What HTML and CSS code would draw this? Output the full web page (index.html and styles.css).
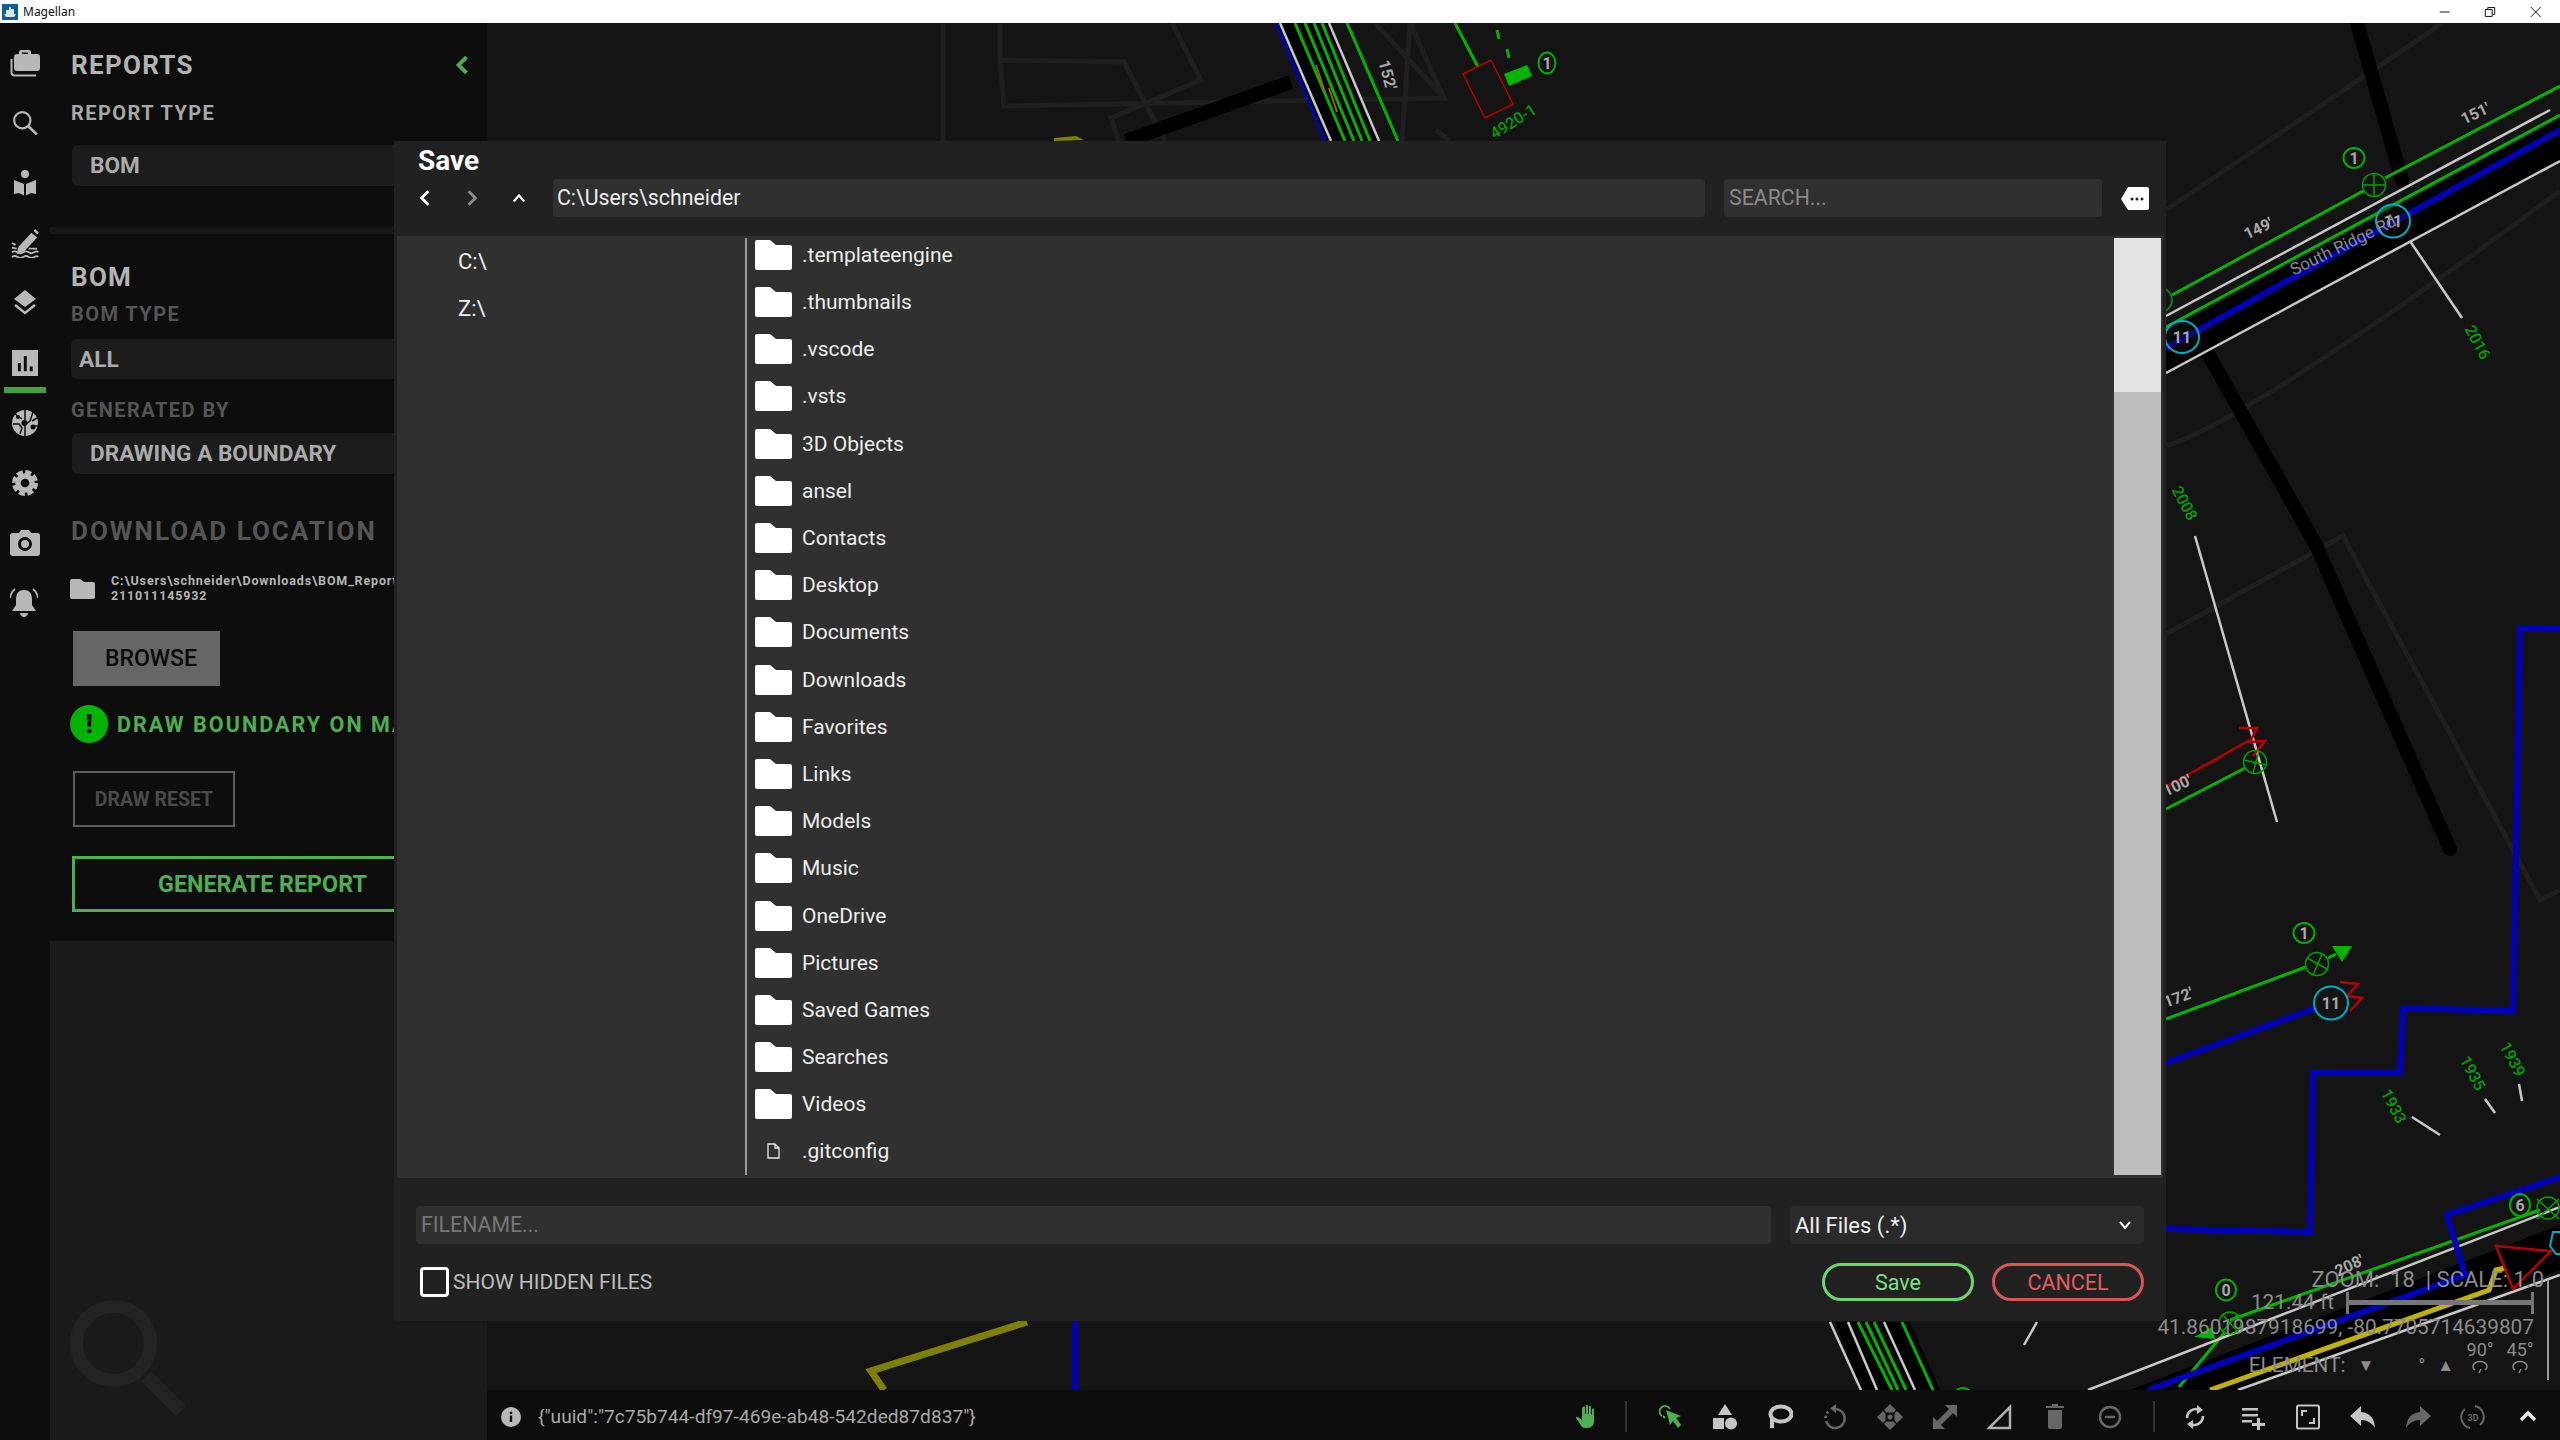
FILE: index.html
```html
<!DOCTYPE html>
<html lang="en">
<head>
<meta charset="utf-8">
<title>Magellan</title>
<link rel="stylesheet" href="styles.css">
</head>
<body>
<svg class="defs" width="0" height="0" aria-hidden="true">
  <defs>
    <symbol id="folder" viewBox="0 0 37 30"><path d="M2 0h13l6 5h14q2 0 2 2v21q0 2-2 2H2q-2 0-2-2V2q0-2 2-2z"/></symbol>
  </defs>
</svg>
<header class="titlebar">
  <svg class="app-logo" viewBox="0 0 16 16"><rect width="16" height="16" fill="#0f5c9c"/><path d="M7 3h2v2h3v5h2l-2 3H4l-2-3h2V6h3z" fill="#dbe8f2"/></svg>
  <span class="app-name">Magellan</span>
  <div class="winctl">
    <svg class="winbtn" viewBox="0 0 46 20"><path d="M18 10h10" stroke="#111" fill="none"/></svg>
    <svg class="winbtn" viewBox="0 0 46 20"><path d="M18.500 7.500h7v7h-7zM21 7V5.500h7v7h-2" stroke="#111" fill="none"/></svg>
    <svg class="winbtn" viewBox="0 0 46 20"><path d="M18 5l10 10M28 5L18 15" stroke="#111" fill="none"/></svg>
  </div>
</header>
<div class="app">
  <nav class="rail">
    <div class="rail-item"><svg class="wide" viewBox="0 0 30 28"><path d="M9 5V3q0-2 2-2h8q2 0 2 2v2h6q3 0 3 3v11q0 3-3 3H7q-3 0-3-3V8q0-3 3-3zm3 0h6V3.500h-6z" fill-rule="evenodd"/><path d="M1.500 10v13q0 3.500 3.500 3.500h21" fill="none" stroke="currentColor" stroke-width="2"/></svg></div>
    <div class="rail-item"><svg viewBox="0 0 24 24"><circle cx="9.500" cy="9.500" r="7.500" fill="none" stroke="currentColor" stroke-width="2"/><path d="M15 15l8 7.500" stroke="currentColor" stroke-width="2.500" fill="none"/></svg></div>
    <div class="rail-item"><svg viewBox="0 0 24 26"><circle cx="12" cy="4" r="4"/><path d="M1 10l10 4v11.500L6 23l-5 1zM23 10l-10 4v11.500l5-2.500 5 1z"/></svg></div>
    <div class="rail-item"><svg class="tall" viewBox="0 0 30 32"><path d="M8 20L22 5l6 5-14 15-8 3zM24 3l2-2 4 4-2 2z"/><path d="M1 16l4 2M1 21l5 1M1 26q3-2 6 0t6 0 6 0 6 0 4 0M1 31q3-2 6 0t6 0 6 0 6 0 4 0M19 22h9" fill="none" stroke="currentColor" stroke-width="2"/></svg></div>
    <div class="rail-item"><svg viewBox="0 0 24 26"><path d="M12 0l11 9-11 8L1 9z"/><path d="M2 15l10 8 10-8" fill="none" stroke="currentColor" stroke-width="2.500"/></svg></div>
    <div class="rail-item active"><svg viewBox="0 0 22 22"><path d="M0 0h22v22H0z"/><path d="M5 11h2.500v7H5zM10 5h2.500v13H10zM15 14h2.500v4H15z" fill="#0d0d0d"/></svg></div>
    <div class="rail-item"><svg viewBox="0 0 26 26"><circle cx="13" cy="13" r="13"/><path d="M13 0v10M3 4l7 5M21 2l-3 9-5 4v11M1 14h6l3 4-2 6M25 8l-5 3M26 16h-6" fill="none" stroke="#0d0d0d" stroke-width="1.500"/><circle cx="12.500" cy="13" r="3" fill="#0d0d0d"/><circle cx="21" cy="17" r="2.500" fill="#0d0d0d"/><circle cx="6" cy="7" r="2" fill="#0d0d0d"/></svg></div>
    <div class="rail-item"><svg viewBox="0 0 24 24"><circle cx="12" cy="12" r="6.500" fill="none" stroke="currentColor" stroke-width="5"/><circle cx="12" cy="12" r="10" fill="none" stroke="currentColor" stroke-width="4" stroke-dasharray="5.500 2.350"/></svg></div>
    <div class="rail-item"><svg class="wide" viewBox="0 0 30 26"><path fill-rule="evenodd" d="M3 3h6l2-3h8l2 3h6q3 0 3 3v17q0 3-3 3H3q-3 0-3-3V6q0-3 3-3zm12 4a7 7 0 1 0 0 14 7 7 0 0 0 0-14zm0 3a4 4 0 1 1 0 8 4 4 0 0 1 0-8z"/></svg></div>
    <div class="rail-item"><svg class="bell" viewBox="0 0 28 30"><path d="M14 2q8 0 8 9v6l4 6H2l4-6v-6q0-9 8-9zM10 25h8q-1 4-4 4t-4-4z"/><path d="M5 1Q1 4 0 10M23 1q4 3 5 9" fill="none" stroke="currentColor" stroke-width="1.800"/></svg></div>
  </nav>
  <aside class="side">
    <section class="panel">
      <div class="panel-head">
        <h1 class="h-big">REPORTS</h1>
        <svg class="collapse" viewBox="0 0 12 18"><path d="M10 2L3 9l7 7" fill="none" stroke="#4caf50" stroke-width="3.500"/></svg>
      </div>
      <div class="label lab-report">REPORT TYPE</div>
      <div class="select sel-report">BOM</div>
      <div class="sep"></div>
      <h2 class="h-big h-bom">BOM</h2>
      <div class="label dim lab-bomtype">BOM TYPE</div>
      <div class="select sel-all">ALL</div>
      <div class="label dim lab-gen">GENERATED BY</div>
      <div class="select sel-gen">DRAWING A BOUNDARY</div>
      <h2 class="h-big dim h-dl">DOWNLOAD LOCATION</h2>
      <div class="path-row">
        <svg class="path-icon" viewBox="0 0 25 20"><path d="M2 0h8l4 3h9q2 0 2 2v13q0 2-2 2H2q-2 0-2-2V2q0-2 2-2z"/></svg>
        <div class="path-text">C:\Users\schneider\Downloads\BOM_Report_<br>211011145932</div>
      </div>
      <button class="btn-browse">BROWSE</button>
      <div class="alert"><span class="alert-dot">!</span><span class="alert-text">DRAW BOUNDARY ON MAP</span></div>
      <button class="btn-reset">DRAW RESET</button>
      <button class="btn-gen">GENERATE REPORT</button>
    </section>
    <div class="side-empty">
      <svg class="ghost" viewBox="0 0 130 130"><circle cx="43.500" cy="43.500" r="37" fill="none" stroke="#232323" stroke-width="13"/><path d="M76 76l35 35" stroke="#232323" stroke-width="14" fill="none"/></svg>
    </div>
  </aside>
  <main class="main">
    <div class="map">
      <svg class="map-svg" viewBox="487 23 2073 1367">
        <g class="road">
          <path d="M943 23V141M1000 23V60L1004 106 1444 98 1410 23 1402 141M1000 60L1124 62 1165 141M1172 23L1201 80 1111 118 1119 141M1375 23L1444 98M1436 130L1450 141"/>
          <path d="M2166 210L2443 23M2166 446Q2250 420 2560 191M2166 634L2343 536 2540 900 2560 890"/>
        </g>
        <path class="bk" d="M1126 141L1291 82" stroke-width="14"/>
        <path class="bk" d="M2357 23L2402 180M2207 352L2317 547 2340 600 2450 849" stroke-width="14" stroke-linecap="round"/>
        <path d="M1054 141l30-1-8-4-22 2z" fill="#808000"/>

        <path d="M2166 332L2560 118V161L2166 373z" fill="#000"/>
        <path d="M1277 23H1330L1380 141H1326z" fill="#000"/>
        <path d="M1835 1322H1910L1940 1390H1860z" fill="#000"/>
        <path d="M2130 1390L2560 1225V1270L2241 1390z" fill="#000"/>

        <g class="ln-g">
          <path d="M1295 23L1345 141M1305 23L1354 141M1314 23L1362 141M1322 23L1370 141M1347 23L1398 141M1455 23L1478 67M1497 30l2 9M1507 49l2 9"/>
          <path d="M2172 295L2363 191M2385 178L2560 86M2166 327L2560 115M2166 809L2245 768M2166 1019L2306 967M2328 958L2336 954M2230 1320L2540 1210M2179 1387L2225 1332"/>
          <path d="M1858 1322L1892 1390M1866 1322L1898 1390M1874 1322L1906 1390M1902 1322L1933 1390"/>
        </g>
        <path d="M1316 65L1325 92M1329 88L1337 112" fill="none" stroke="#a05a10" stroke-width="2"/>
        <g class="ln-w">
          <path d="M1280 23L1331 141M1329 23L1379 141M2166 316L2550 110M2166 373L2560 161M2410 241L2462 318M2195 536L2277 822"/>
          <path d="M1830 1322L1861 1390M1848 1322L1877 1390M1884 1322L1915 1390M2088 1390L2560 1207M2238 1390L2560 1275M2037 1322L2024 1345"/>
          <path d="M2412 1117l28 18M2485 1099l10 14M2519 1084l3 17"/>
        </g>
        <g class="ln-b">
          <path d="M1276 23L1325 141" stroke-width="3"/>
          <path d="M2166 348L2560 130"/>
          <path d="M2166 1063L2316 1008"/>
          <path d="M2560 628H2520L2513 1011 2403 1008 2400 1073H2313L2310 1232 2166 1229"/>
          <path d="M1075 1322V1390"/>
          <path d="M2560 1177L2447 1215 2465 1275 2148 1390"/>
        </g>
        <path d="M1027 1322L871 1371 884 1390" fill="none" stroke="#808000" stroke-width="7"/>
        <path d="M2210 1390L2489 1290 2496 1270 2505 1268" fill="none" stroke="#bfb300" stroke-width="5"/>
        <path d="M2548 1280V1380" fill="none" stroke="#9a9a9a" stroke-width="2"/>

        <g class="ln-r">
          <path d="M1463 74L1491 60 1513 104 1485 118z" stroke-width="1.500"/>
          <path d="M2166 787L2250 740M2239 728h18l-7 14 15-1-12 15" stroke-width="2.500"/>
          <path d="M2340 982l18 2-11 12 15 2-12 13" stroke-width="2.500"/>
          <path d="M2496 1246L2551 1251 2513 1289z" stroke-width="2.500"/>
        </g>
        <path d="M1504 74L1527 65 1532 76 1509 86z" fill="#00b400"/>
        <path d="M2332 946H2352L2342 962z" fill="#00b400"/>
        <path d="M2194 1337L2212 1327 2215 1339z" fill="#00b400"/>

        <g class="cross">
          <circle cx="2374" cy="185" r="11.500"/><path d="M2363 185h23M2374 173v24"/>
          <circle cx="2255" cy="762" r="11.500"/><path d="M2244 760l22 5M2259 751l-6 22"/>
          <circle cx="2317" cy="964" r="11.500"/><path d="M2307 958l20 11M2322 954l-9 21"/>
          <circle cx="2230" cy="1323" r="11"/><path d="M2222 1314l16 18M2238 1314l-16 18"/>
          <circle cx="2160" cy="300" r="12"/><circle cx="2548" cy="1208" r="11"/><path d="M2537 1199l22 20M2559 1199l-22 20"/>
        </g>
        <g class="badge-g">
          <ellipse cx="1547" cy="63" rx="8.500" ry="10.500"/><ellipse cx="2354" cy="158" rx="10.500" ry="10"/><ellipse cx="2304" cy="933" rx="10.500" ry="10"/><ellipse cx="2226" cy="1290" rx="10" ry="10.500"/><ellipse cx="2520" cy="1205" rx="10" ry="11"/>
          <circle cx="1963" cy="1398" r="10"/>
        </g>
        <g class="badge-t">
          <ellipse cx="2182" cy="337" rx="17" ry="16"/><ellipse cx="2393" cy="221" rx="17" ry="16.500"/><ellipse cx="2331" cy="1003" rx="17" ry="16.500"/><path d="M2560 1232h-7l-3 14 6 8h4"/>
        </g>
        <g class="m-txt">
          <text x="1547" y="69" text-anchor="middle">1</text>
          <text x="2354" y="164" text-anchor="middle">1</text>
          <text x="2304" y="939" text-anchor="middle">1</text>
          <text x="2226" y="1296" text-anchor="middle">0</text>
          <text x="2520" y="1211" text-anchor="middle">6</text>
          <text x="2182" y="343" text-anchor="middle">11</text>
          <text x="2393" y="227" text-anchor="middle">11</text>
          <text x="2331" y="1009" text-anchor="middle">11</text>
          <text x="1387" y="80" text-anchor="middle" transform="rotate(75 1387 75)">152'</text>
          <text x="2258" y="234" text-anchor="middle" transform="rotate(-25 2258 228)">149'</text>
          <text x="2475" y="119" text-anchor="middle" transform="rotate(-25 2475 113)">151'</text>
          <text x="2177" y="791" text-anchor="middle" transform="rotate(-25 2177 785)">100'</text>
          <text x="2178" y="1003" text-anchor="middle" transform="rotate(-20 2178 997)">172'</text>
          <text x="2349" y="1271" text-anchor="middle" transform="rotate(-25 2349 1265)">208'</text>
          <text class="street" x="2343" y="251" text-anchor="middle" transform="rotate(-26 2343 245)">South Ridge Rd</text>
        </g>
        <g class="m-grn">
          <text x="1513" y="127" text-anchor="middle" transform="rotate(-32 1513 121)">4920-1</text>
          <text x="2478" y="348" text-anchor="middle" transform="rotate(62 2478 342)">2016</text>
          <text x="2185" y="509" text-anchor="middle" transform="rotate(62 2185 503)">2008</text>
          <text x="2394" y="1112" text-anchor="middle" transform="rotate(62 2394 1106)">1933</text>
          <text x="2473" y="1079" text-anchor="middle" transform="rotate(62 2473 1073)">1935</text>
          <text x="2513" y="1065" text-anchor="middle" transform="rotate(62 2513 1059)">1939</text>
        </g>
      </svg>
      <div class="hud">
        <div class="hud-zoom">ZOOM:&nbsp;&nbsp;18&nbsp;&nbsp;|&nbsp;SCALE:&nbsp;1.0</div>
        <div class="hud-scale"><span>121.44 ft</span><i class="bar"></i></div>
        <div class="hud-coord">41.8601987918699, -80.7705714639807</div>
        <div class="hud-el"><span>ELEMENT:</span><span class="tri">▼</span><span class="deg">°</span><span class="tri">▲</span>
          <span class="rot"><b>90°</b><svg viewBox="0 0 20 14"><path d="M5 10A7 5 0 1 1 15 10M11 9l-2 4" fill="none" stroke="currentColor" stroke-width="1.500"/></svg></span>
          <span class="rot"><b>45°</b><svg viewBox="0 0 20 14"><path d="M5 10A7 5 0 1 1 15 10M11 9l-2 4" fill="none" stroke="currentColor" stroke-width="1.500"/></svg></span>
        </div>
      </div>
    </div>
    <footer class="status">
      <svg class="info" viewBox="0 0 20 20"><circle cx="10" cy="10" r="10" fill="#b9b9b9"/><path d="M8.800 8.500h2.400V15H8.800zM8.800 4.700h2.400v2.400H8.800z" fill="#0d0d0d"/></svg>
      <span class="status-text">{"uuid":"7c75b744-df97-469e-ab48-542ded87d837"}</span>
      <div class="tools">
        <span class="tool on"><svg viewBox="0 0 24 26"><path d="M8 3q1-1.500 2 0v7h1V1.500q1-1.500 2 0V10h1V2.500q1-1.500 2 0V11h1V5q1-1.500 2 0v12q0 7-7 7H10q-3 0-5-4l-4-6q0-2 2-1l4 3V5q0-1.500 1-2z"/></svg></span>
        <i class="tool-div first"></i>
        <span class="tool on"><svg viewBox="0 0 24 26"><path d="M8 6l15 6-5 2 5 7-3 3-5-7-3 4z"/><path d="M4 11A5.500 5.500 0 1 1 12 4" fill="none" stroke="currentColor" stroke-width="1.800" transform="translate(0 1)"/><path d="M5 12l2 2" stroke="currentColor" stroke-width="2"/></svg></span>
        <span class="tool lit"><svg viewBox="0 0 26 26"><path d="M13 0l7 11H6zM1 14h11v11H1z"/><circle cx="19" cy="19.500" r="6"/></svg></span>
        <span class="tool lit"><svg viewBox="0 0 26 26"><path d="M5 24V15" stroke="currentColor" stroke-width="4" fill="none"/><ellipse cx="14" cy="10" rx="10.500" ry="7.500" fill="none" stroke="currentColor" stroke-width="4"/></svg></span>
        <span class="tool dimt"><svg viewBox="0 0 26 26"><path d="M13 5a9.500 9.500 0 1 1-9 12" fill="none" stroke="currentColor" stroke-width="2.600"/><path d="M14 0v9L8 4.500z"/><path d="M3.500 14a9.500 9.500 0 0 1 3-6.500" fill="none" stroke="currentColor" stroke-width="2.600" stroke-dasharray="2.500 2"/></svg></span>
        <span class="tool dimt"><svg viewBox="0 0 26 26"><path d="M13 0l6 6-2.500 2.500h-7L7 6zM13 26l-6-6 2.500-2.500h7L19 20zM0 13l6-6 2.500 2.500v7L6 19zM26 13l-6 6-2.500-2.500v-7L20 7z"/><circle cx="13" cy="13" r="2.500"/></svg></span>
        <span class="tool dimt"><svg viewBox="0 0 26 26"><path d="M1 25V13l4 4L17 5l-4-4h12v12l-4-4L9 21l4 4z"/></svg></span>
        <span class="tool lit2"><svg viewBox="0 0 26 26"><path d="M23 3v21H2z" fill="none" stroke="currentColor" stroke-width="2.500"/></svg></span>
        <span class="tool dimt"><svg viewBox="0 0 26 26"><path d="M4 2h18v2H4zM6 6h14v17q0 2-2 2H8q-2 0-2-2zM10 0h6v2h-6z"/></svg></span>
        <span class="tool dimt"><svg viewBox="0 0 26 26"><circle cx="13" cy="13" r="10" fill="none" stroke="currentColor" stroke-width="2.500"/><path d="M8 13h10" stroke="currentColor" stroke-width="2.500"/></svg></span>
        <i class="tool-div second"></i>
        <span class="tool lit sync"><svg viewBox="0 0 26 26"><path d="M5 14a9 9 0 0 1 13-8M21 12a9 9 0 0 1-13 8" fill="none" stroke="currentColor" stroke-width="2.600"/><path d="M15 1l6 5-6 4zM11 16v9l-6-5z"/></svg></span>
        <span class="tool lit"><svg viewBox="0 0 26 26"><path d="M2 4h16v2.500H2zM2 10h16v2.500H2zM2 16h10v2.500H2zM17 14h3v5h5v3h-5v4h-3v-4h-5v-3h5z"/></svg></span>
        <span class="tool lit"><svg viewBox="0 0 26 26"><rect x="2" y="1.500" width="22" height="23" rx="1.500" fill="none" stroke="currentColor" stroke-width="2"/><path d="M7 12V7h5M19 14v5h-5" fill="none" stroke="currentColor" stroke-width="2"/></svg></span>
        <span class="tool lit"><svg viewBox="0 0 26 26"><path d="M11 2v6q13 1 14 16-5-8-14-8v6L0 12z"/></svg></span>
        <span class="tool dimt"><svg viewBox="0 0 26 26"><path d="M15 2v6Q2 9 1 24q5-8 14-8v6l11-10z"/></svg></span>
        <span class="tool dimt"><svg viewBox="0 0 26 26"><path d="M15 2a11 11 0 0 1 5 19M10 24A11 11 0 0 1 5 5" fill="none" stroke="currentColor" stroke-width="2"/><text class="t3d" x="13" y="17" text-anchor="middle">3D</text></svg></span>
        <span class="tool white"><svg viewBox="0 0 26 26"><path d="M6 16l7-7 7 7" fill="none" stroke="currentColor" stroke-width="3.500"/></svg></span>
      </div>
    </footer>
  </main>

  <section class="dialog">
    <div class="dlg-head">
      <div class="dlg-title">Save</div>
      <div class="dlg-bar">
        <div class="nav-btns">
          <svg class="nav-ic" viewBox="0 0 12 16"><path d="M9 2L3 8l6 6" fill="none" stroke="#fff" stroke-width="2.500"/></svg>
          <svg class="nav-ic" viewBox="0 0 12 16"><path d="M3 2l6 6-6 6" fill="none" stroke="#8c8c8c" stroke-width="2.500"/></svg>
          <svg class="nav-ic" viewBox="0 0 16 12"><path d="M2 10l6-7 6 7" fill="none" stroke="#fff" stroke-width="2.500"/></svg>
        </div>
        <div class="field path-field">C:\Users\schneider</div>
        <div class="field search-field">SEARCH...</div>
        <svg class="tag" viewBox="0 0 28 23"><path d="M7 0h19q2 0 2 2v19q0 2-2 2H7l-7-11z" fill="#fff"/><circle cx="11" cy="12" r="1.500" fill="#222"/><circle cx="16" cy="12" r="1.500" fill="#222"/><circle cx="21" cy="12" r="1.500" fill="#222"/></svg>
      </div>
    </div>
    <div class="dlg-body">
      <div class="drives">
        <div class="drive">C:\</div>
        <div class="drive">Z:\</div>
      </div>
      <div class="files">
        <div class="rows">
          <div class="row"><svg class="fld"><use href="#folder"/></svg>.templateengine</div>
          <div class="row"><svg class="fld"><use href="#folder"/></svg>.thumbnails</div>
          <div class="row"><svg class="fld"><use href="#folder"/></svg>.vscode</div>
          <div class="row"><svg class="fld"><use href="#folder"/></svg>.vsts</div>
          <div class="row"><svg class="fld"><use href="#folder"/></svg>3D Objects</div>
          <div class="row"><svg class="fld"><use href="#folder"/></svg>ansel</div>
          <div class="row"><svg class="fld"><use href="#folder"/></svg>Contacts</div>
          <div class="row"><svg class="fld"><use href="#folder"/></svg>Desktop</div>
          <div class="row"><svg class="fld"><use href="#folder"/></svg>Documents</div>
          <div class="row"><svg class="fld"><use href="#folder"/></svg>Downloads</div>
          <div class="row"><svg class="fld"><use href="#folder"/></svg>Favorites</div>
          <div class="row"><svg class="fld"><use href="#folder"/></svg>Links</div>
          <div class="row"><svg class="fld"><use href="#folder"/></svg>Models</div>
          <div class="row"><svg class="fld"><use href="#folder"/></svg>Music</div>
          <div class="row"><svg class="fld"><use href="#folder"/></svg>OneDrive</div>
          <div class="row"><svg class="fld"><use href="#folder"/></svg>Pictures</div>
          <div class="row"><svg class="fld"><use href="#folder"/></svg>Saved Games</div>
          <div class="row"><svg class="fld"><use href="#folder"/></svg>Searches</div>
          <div class="row"><svg class="fld"><use href="#folder"/></svg>Videos</div>
          <div class="row"><span class="fil-wrap"><svg class="fil" viewBox="0 0 13 16"><path d="M1 1h7l4 4v10H1zM8 1v4h4" fill="none" stroke="#e8e8e8" stroke-width="1.300"/></svg></span>.gitconfig</div>
        </div>
      </div>
      <div class="scroll"><div class="thumb"></div></div>
    </div>
    <div class="dlg-foot">
      <div class="foot-row">
        <div class="field name-field">FILENAME...</div>
        <div class="filter"><span>All Files (.*)</span><svg class="filter-ic" viewBox="0 0 14 10"><path d="M2 2l5 6 5-6" fill="none" stroke="#fff" stroke-width="2"/></svg></div>
      </div>
      <div class="foot-row second">
        <label class="check"><span class="box"></span>SHOW HIDDEN FILES</label>
        <button class="pill ok">Save</button>
        <button class="pill no">CANCEL</button>
      </div>
    </div>
  </section>
</div>
</body>
</html>
```
FILE: styles.css
```css
* { box-sizing: border-box; }
html, body { margin: 0; padding: 0; }
body {
  width: 2560px;
  height: 1440px;
  overflow: hidden;
  background: #141414;
  font-family: Roboto, "Liberation Sans", sans-serif;
}
.defs { position: absolute; }
.titlebar {
  height: 23px;
  background: #fff;
  display: flex;
  align-items: center;
  padding-left: 2px;
}
.app-logo { width: 16px; height: 16px; }
.app-name { margin-left: 5px; font: 12px "Noto Sans", sans-serif; color: #111; }
.winctl { margin-left: auto; display: flex; padding-right: 2px; }
.winbtn { width: 45.500px; height: 20px; }

.app { position: relative; display: flex; height: 1417px; }

.rail { width: 50px; background: #0d0d0d; padding-top: 10px; color: #b8b8b8; }
.rail-item { height: 60px; display: flex; align-items: center; justify-content: center; position: relative; }
.rail-item svg { width: 26px; height: 26px; fill: currentColor; }
.rail-item svg.tall { width: 28px; height: 30px; }
.rail-item svg.wide { width: 30px; height: 28px; }
.rail-item svg.bell { width: 28px; height: 30px; margin-left: -3px; }
.rail-item.active::after {
  content: "";
  position: absolute;
  left: 4px;
  right: 4px;
  top: 54px;
  height: 6px;
  background: #43a047;
}

.side { width: 437px; display: flex; flex-direction: column; }
.panel {
  height: 918px;
  flex: none;
  background: #0d0d0d;
  padding: 27px 0 0 21px;
  overflow: hidden;
  display: flex;
  flex-direction: column;
  align-items: flex-start;
}
.panel-head { width: 100%; display: flex; align-items: center; justify-content: space-between; padding-right: 18px; }
.collapse { width: 14px; height: 20px; }
.h-big {
  margin: 0;
  font-size: 26px;
  line-height: 30px;
  font-weight: 700;
  letter-spacing: 1.300px;
  color: #b3b3b3;
  white-space: nowrap;
}
.label {
  font-size: 20px;
  line-height: 24px;
  font-weight: 700;
  letter-spacing: 1.450px;
  color: #a8a8a8;
  white-space: nowrap;
}
.h-big.dim, .label.dim { color: #555; }
.select {
  width: 500px;
  background: #1c1c1c;
  border-radius: 6px;
  font-size: 22.600px;
  font-weight: 700;
  color: #ababab;
  display: flex;
  align-items: center;
  flex: none;
}
.lab-report { margin-top: 21px; }
.sel-report { margin: 20px 0 0 1px; height: 41px; padding-left: 18px; }
.sep { flex: none; margin: 41px 0 0 -21px; width: 437px; height: 7px; background: #181818; }
.h-bom { margin-top: 28px; }
.lab-bomtype { margin-top: 10px; }
.sel-all { margin-top: 13px; height: 40px; padding-left: 8px; }
.lab-gen { margin-top: 19px; }
.sel-gen { margin: 11px 0 0 1px; height: 41px; padding-left: 18px; }
.h-dl { margin-top: 42px; letter-spacing: 2px; }
.path-row { margin-top: 28px; display: flex; align-items: center; flex: none; }
.path-icon { width: 25px; height: 20px; margin-left: -1px; fill: #b8b8b8; flex: none; }
.path-text {
  margin-left: 16px;
  font-size: 12.500px;
  line-height: 14.500px;
  font-weight: 700;
  letter-spacing: 0.850px;
  color: #b5b5b5;
  white-space: nowrap;
}
.btn-browse {
  flex: none;
  margin: 28px 0 0 2px;
  width: 147px;
  height: 55px;
  border: 0;
  background: #666;
  color: #0a0a0a;
  font: 500 23px Roboto, sans-serif;
  text-align: left;
  padding: 0 0 0 32px;
}
.alert { margin-top: 19px; display: flex; align-items: center; flex: none; }
.alert-dot {
  width: 38px;
  height: 38px;
  margin-left: -1px;
  border-radius: 50%;
  background: #00b400;
  color: #0d0d0d;
  font-size: 26px;
  font-weight: 900;
  line-height: 38px;
  text-align: center;
}
.alert-text {
  margin-left: 9px;
  font-size: 21.500px;
  font-weight: 700;
  letter-spacing: 2.050px;
  color: #4caf50;
  white-space: nowrap;
}
.btn-reset {
  flex: none;
  margin: 28px 0 0 2px;
  width: 162px;
  height: 56px;
  background: none;
  border: 2px solid #5c5c5c;
  color: #4a4a4a;
  font: 700 19.500px Roboto, sans-serif;
}
.btn-gen {
  flex: none;
  margin: 29px 0 0 1px;
  width: 500px;
  height: 56px;
  background: none;
  border: 3px solid #4caf50;
  color: #4caf50;
  font: 700 23.300px Roboto, sans-serif;
  text-align: left;
  padding: 0 0 0 83px;
}
.side-empty { flex: 1; background: #1a1a1a; position: relative; }
.ghost { width: 130px; height: 130px; display: block; margin: 359px 0 0 20px; }

.main { flex: 1; min-width: 0; display: flex; flex-direction: column; }
.map { flex: 1; position: relative; background: #141414; overflow: hidden; }
.map-svg { display: block; width: 2073px; height: 1367px; }
.road path { fill: none; stroke: #1f1f1f; stroke-width: 5; }
.bk { fill: none; stroke: #000; }
.ln-g { fill: none; stroke: #00b400; stroke-width: 3; }
.ln-w { fill: none; stroke: #c8c8c8; stroke-width: 2.500; }
.ln-b { fill: none; stroke: #0000b8; stroke-width: 6; }
.ln-r { fill: none; stroke: #b80000; }
.cross { fill: none; stroke: #00a000; stroke-width: 1.500; }
.badge-g { fill: #141414; stroke: #00b000; stroke-width: 2; }
.badge-t { fill: #141414; fill-opacity: .4; stroke: #00acc1; stroke-width: 2; }
.m-txt text { font: 700 16px Roboto, sans-serif; fill: #a8a8a8; }
.m-txt .street { font-size: 17px; font-weight: 400; fill: #8a8a8a; }
.m-grn text { font: 500 16px Roboto, sans-serif; fill: #00a000; }

.hud {
  position: absolute;
  right: 26px;
  top: 1244px;
  width: 400px;
  color: #8c8c8c;
  font-size: 20.800px;
  line-height: 25px;
  display: flex;
  flex-direction: column;
  align-items: flex-end;
  white-space: nowrap;
}
.hud-zoom { margin-right: -10px; height: 23px; font-size: 22px; }
.hud-scale { display: flex; align-items: center; height: 25px; width: 100%; justify-content: flex-end; }
.hud-scale .bar {
  width: 188px;
  height: 22px;
  margin-left: 12px;
  border: solid #777;
  border-width: 0 3px;
  background: linear-gradient(#777, #777) center / 100% 5px no-repeat;
}
.hud-coord { height: 25px; }
.hud-el { display: flex; align-items: flex-end; height: 38px; }
.hud-el .tri { font-size: 17px; margin: 0 0 3px 12px; line-height: 20px; }
.hud-el .deg { margin-left: 44px; font-size: 18px; }
.rot { display: flex; flex-direction: column; align-items: center; margin-left: 12px; width: 28px; font-size: 18px; line-height: 20px; }
.rot b { font-weight: 400; }
.rot svg { width: 20px; height: 14px; margin-bottom: 4px; }

.status {
  height: 50px;
  background: #0d0d0d;
  display: flex;
  align-items: center;
  padding: 3px 5px 0 14px;
}
.info { width: 20px; height: 20px; flex: none; }
.status-text { margin-left: 17px; font-size: 19.150px; color: #a8a8a8; white-space: nowrap; }
.tools { margin-left: auto; display: flex; align-items: center; }
.tool { width: 55px; height: 28px; display: flex; align-items: center; justify-content: center; color: #666; }
.tool svg { width: 26px; height: 26px; fill: currentColor; }
.tool.on { color: #4caf50; }
.tool.lit { color: #c4c4c4; }
.tool.lit2 { color: #b0b0b0; }
.tool.dimt { color: #666; }
.tool.white { color: #e8e8e8; }
.tool.sync { margin-right: 3px; }
.t3d { font: 700 9px Roboto, sans-serif; }
.tool-div { width: 2px; height: 31px; background: #333; flex: none; }
.tool-div.first { margin: 0 15px 0 11px; }
.tool-div.second { margin: 0 12px 0 16px; }

.dialog {
  position: absolute;
  left: 394px;
  top: 118px;
  width: 1772px;
  height: 1180px;
  background: #212121;
  border-radius: 0 0 4px 4px;
  display: flex;
  flex-direction: column;
}
.dlg-head { height: 95px; padding-left: 24px; flex: none; }
.dlg-title { height: 38px; font-size: 28px; line-height: 40px; font-weight: 700; color: #fff; }
.dlg-bar { display: flex; align-items: center; height: 38px; }
.nav-btns { display: flex; width: 135px; flex: none; align-items: center; }
.nav-ic { width: 14px; height: 18px; flex: none; }
.nav-ic:nth-child(n+2) { margin-left: 33px; }
.field {
  background: #303030;
  border-radius: 4px;
  height: 38px;
  padding-left: 4px;
  font-size: 21.300px;
  line-height: 38px;
  color: #eee;
  white-space: nowrap;
}
.path-field { width: 1152px; }
.search-field { width: 378px; margin-left: 19px; color: #8a8a8a; padding-left: 5px; }
.tag { width: 28px; height: 23px; margin-left: 19px; flex: none; }
.dlg-body {
  flex: 1;
  min-height: 0;
  margin: 0 3px;
  padding: 2px 2px 3px 0;
  background: #303030;
  display: flex;
}
.drives { width: 350px; border-right: 2px solid #9a9a9a; padding: 0 0 0 61px; flex: none; }
.drive { height: 47px; line-height: 47px; font-size: 22px; color: #eee; }
.files { flex: 1; min-width: 0; overflow: hidden; }
.rows { margin-top: -6.700px; }
.row {
  height: 47.200px;
  display: flex;
  align-items: center;
  padding-left: 8px;
  font-size: 21px;
  color: #eee;
}
.fld { width: 37px; height: 30px; margin-right: 10px; fill: #fff; flex: none; }
.fil-wrap { width: 37px; margin-right: 10px; display: flex; justify-content: center; flex: none; }
.fil { width: 13px; height: 16px; }
.scroll { width: 47px; background: #bdbdbd; flex: none; }
.thumb { height: 154px; background: #e3e3e3; }
.dlg-foot { height: 143px; flex: none; padding: 28px 22px 0; }
.foot-row { display: flex; align-items: center; height: 38px; }
.foot-row.second { margin-top: 19px; }
.name-field { width: 1355px; color: #777; padding-left: 5px; }
.filter {
  width: 354px;
  height: 38px;
  margin-left: 19px;
  background: #2a2a2a;
  border-radius: 4px;
  display: flex;
  align-items: center;
  justify-content: space-between;
  padding: 0 12px 0 5px;
  font-size: 22px;
  color: #eee;
}
.filter-ic { width: 14px; height: 10px; }
.check { display: flex; align-items: center; font-size: 21px; color: #bdbdbd; margin-left: 4px; margin-right: auto; }
.box { width: 29px; height: 30px; border: 3px solid #fff; border-radius: 4px; margin-right: 4px; }
.pill {
  width: 152px;
  height: 38px;
  border-radius: 19px;
  background: none;
  border: 3px solid;
  font: 400 21.500px Roboto, sans-serif;
  padding: 0;
}
.pill.ok { border-color: #69d66f; color: #7be081; }
.pill.no { margin-left: 18px; border-color: #d95555; color: #e25c5c; }
```
